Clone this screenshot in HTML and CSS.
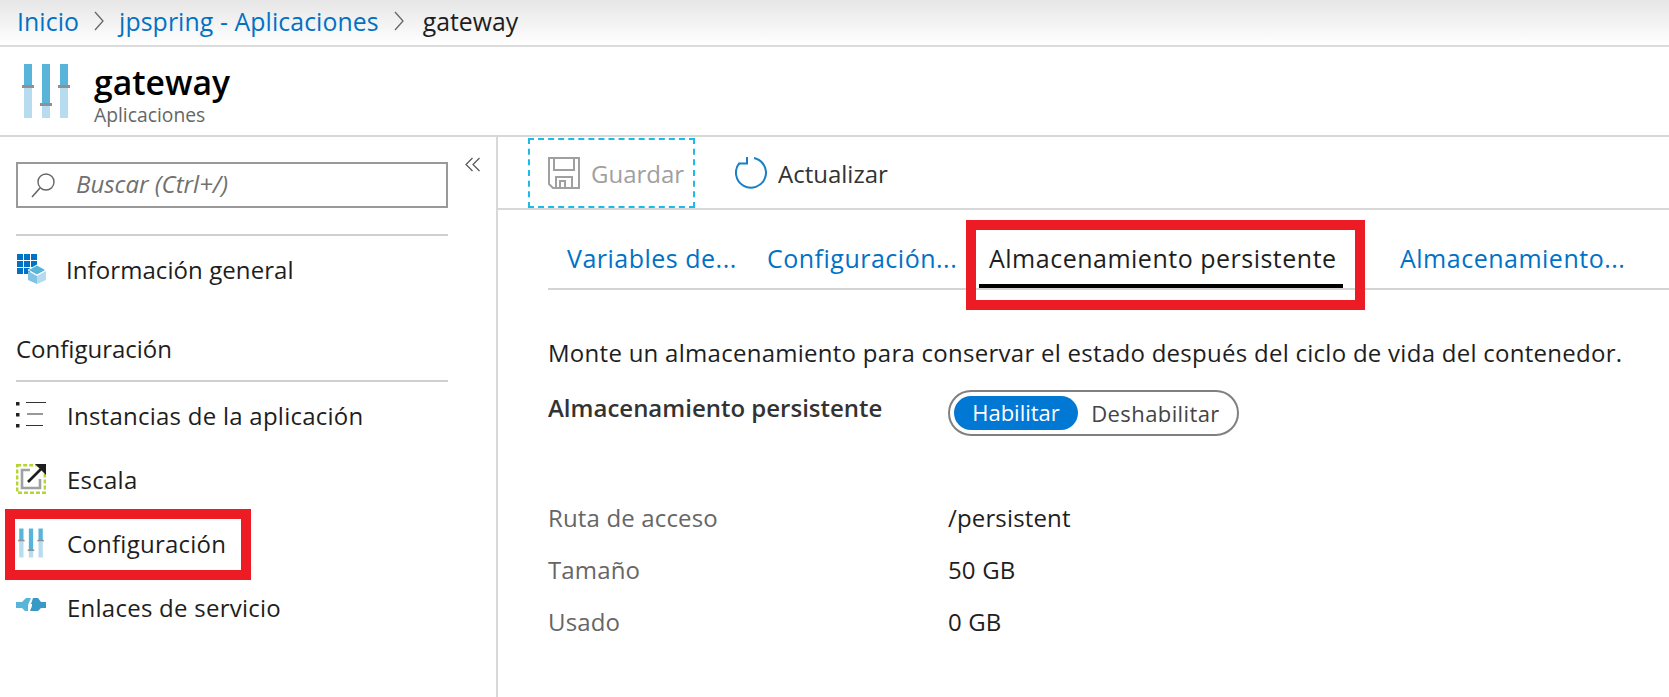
FILE: index.html
```html
<!DOCTYPE html>
<html lang="es">
<head>
  <meta charset="UTF-8" />
  <title>gateway - Aplicaciones</title>
  <link rel="stylesheet" href="styles.css">
</head>
<body>
  <svg class="defs" width="0" height="0">
    <symbol id="sliders" viewBox="0 0 48 56">
      <rect x="2" y="1" width="8" height="22" fill="#59b4d9"/>
      <rect x="2" y="25" width="8" height="30" fill="#b8dcef"/>
      <rect x="0" y="22" width="12" height="3" fill="#909090"/>
      <rect x="20" y="1" width="8" height="40" fill="#59b4d9"/>
      <rect x="20" y="43" width="8" height="12" fill="#b8dcef"/>
      <rect x="18" y="40" width="12" height="3" fill="#909090"/>
      <rect x="38" y="1" width="8" height="22" fill="#59b4d9"/>
      <rect x="38" y="25" width="8" height="30" fill="#b8dcef"/>
      <rect x="36" y="22" width="12" height="3" fill="#909090"/>
    </symbol>
  </svg>

  <nav class="breadcrumb">
    <a href="#">Inicio</a>
    <svg class="chevron" viewBox="0 0 10 20"><path d="M1 1l8 9-8 9" fill="none" stroke="#666" stroke-width="1.3"/></svg>
    <a href="#">jpspring - Aplicaciones</a>
    <svg class="chevron" viewBox="0 0 10 20"><path d="M1 1l8 9-8 9" fill="none" stroke="#666" stroke-width="1.3"/></svg>
    <span class="crumb-last">gateway</span>
  </nav>

  <header class="blade-head">
    <svg class="blade-icon"><use href="#sliders"/></svg>
    <div class="blade-text">
      <h1>gateway</h1>
      <div class="blade-sub">Aplicaciones</div>
    </div>
  </header>

  <div class="layout">
    <aside class="sidebar">
      <div class="search-row">
        <div class="search">
          <svg class="search-icon" viewBox="0 0 26 26"><circle cx="16" cy="10" r="8" fill="none" stroke="#666" stroke-width="1.4"/><path d="M10 16L2 25" stroke="#666" stroke-width="1.6"/></svg>
          <span class="search-text">Buscar (Ctrl+/)</span>
        </div>
        <svg class="collapse" viewBox="0 0 15 15"><path d="M7.5 1L1 7.5 7.5 14M14.5 1L8 7.5l6.5 6.5" fill="none" stroke="#555" stroke-width="1.2"/></svg>
      </div>
      <div class="nav-item nav-first">
        <svg class="nav-icon" viewBox="0 0 30 30">
          <path d="M1 0h6v6H1zM8 0h6v6H8zM15 0h6v6h-6zM1 7h6v6H1zM8 7h6v6H8zM15 7h6v6h-6zM1 14h6v6H1zM8 14h6v6H8z" fill="#0072c6"/>
          <path d="M21 11l9 5-9 5-9-5z" fill="#59b4d9" stroke="#fff" stroke-width="1"/>
          <path d="M12 17l9 5v8l-9-4z" fill="#7fc4e4"/>
          <path d="M30 17l-9 5v8l9-4z" fill="#b3dcee"/>
        </svg>
        Información general
      </div>
      <div class="nav-title">Configuración</div>
      <div class="nav-item">
        <svg class="nav-icon" viewBox="0 0 30 30">
          <path d="M0 2h3.5v3.5H0zM0 13h3.5v3.5H0zM0 24h3.5v3.5H0z" fill="#222"/>
          <path d="M10 2.5h20M11 14h16M10 25.5h17" stroke="#333" stroke-width="1.2"/>
        </svg>
        Instancias de la aplicación
      </div>
      <div class="nav-item">
        <svg class="nav-icon" viewBox="0 0 30 30">
          <rect x="1.2" y="1.2" width="27.6" height="27.6" fill="none" stroke="#b8d432" stroke-width="2.4" stroke-dasharray="4 2"/>
          <path d="M14 6H6v18h18v-9" fill="none" stroke="#a0a1a2" stroke-width="2.6"/>
          <path d="M12 18L26 4" stroke="#1e1e1e" stroke-width="2.6"/>
          <path d="M19 0h11v11z" fill="#1e1e1e"/>
        </svg>
        Escala
      </div>
      <div class="nav-item nav-marked">
        <svg class="nav-icon"><use href="#sliders"/></svg>
        Configuración
      </div>
      <div class="nav-item">
        <svg class="nav-icon" viewBox="0 0 30 30">
          <path d="M0 10h6l4-4h5l-3 7v6H9l-3-3H0z" fill="#59b4d9"/>
          <path d="M17 6h5l3 4h5v6h-5l-3 3h-8l2-5v-2h-1z" fill="#3999c6"/>
        </svg>
        Enlaces de servicio
      </div>
    </aside>

    <main class="content">
      <div class="toolbar">
        <button class="tool tool-focus" disabled>
          <svg class="tool-icon" viewBox="0 0 32 32">
            <path d="M1 1h30v30H5l-4-4z" fill="none" stroke="#a0a0a0" stroke-width="2"/>
            <path d="M6 1v12h20V1M8 31V20h16v11M12 31v-7h5v7" fill="none" stroke="#a0a0a0" stroke-width="2"/>
          </svg>
          Guardar
        </button>
        <button class="tool tool-refresh">
          <svg class="tool-icon" viewBox="0 0 32 32">
            <path d="M19 1A15 15 0 1 1 4.5 6" fill="none" stroke="#1a7fc4" stroke-width="2"/>
            <path d="M12 0v6.5H4" fill="none" stroke="#1a7fc4" stroke-width="2"/>
          </svg>
          Actualizar
        </button>
      </div>

      <div class="pane">
        <div class="tabs">
          <a class="tab tab-one" href="#">Variables de...</a>
          <a class="tab tab-two" href="#">Configuración...</a>
          <a class="tab tab-active" href="#">Almacenamiento persistente</a>
          <a class="tab tab-four" href="#">Almacenamiento...</a>
        </div>

        <p class="intro">Monte un almacenamiento para conservar el estado después del ciclo de vida del contenedor.</p>

        <div class="field">
          <label class="field-label">Almacenamiento persistente</label>
          <div class="toggle">
            <span class="toggle-on">Habilitar</span>
            <span class="toggle-off">Deshabilitar</span>
          </div>
        </div>

        <dl class="details">
          <dt>Ruta de acceso</dt><dd>/persistent</dd>
          <dt>Tamaño</dt><dd>50 GB</dd>
          <dt>Usado</dt><dd>0 GB</dd>
        </dl>
      </div>
    </main>
  </div>
</body>
</html>
```

FILE: styles.css
```css
*, *::before, *::after {
  box-sizing: border-box;
}
html, body {
  height: 100%;
}
body {
  margin: 0;
  display: flex;
  flex-direction: column;
  overflow: hidden;
  font-family: "Open Sans", "Noto Sans", sans-serif;
  font-size: 24px;
  color: #1e1e1e;
  background: white;
}
a {
  color: #0072c6;
  text-decoration: none;
}
.defs {
  position: absolute;
}

/* breadcrumb */
.breadcrumb {
  height: 47px;
  flex: none;
  display: flex;
  align-items: center;
  gap: 15px;
  padding: 0 0 4px 17px;
  font-size: 24.8px;
  letter-spacing: 0.1px;
  background: linear-gradient(to bottom, #e6e6e6, #ffffff);
  border-bottom: 2px solid #dcdcdc;
}
.chevron {
  width: 10px;
  height: 20px;
}
.crumb-last {
  margin-left: 4px;
  letter-spacing: 0;
}

/* blade header */
.blade-head {
  height: 90px;
  flex: none;
  display: flex;
  align-items: center;
  gap: 24px;
  padding-left: 22px;
  border-bottom: 2px solid #d8d8d8;
}
.blade-icon {
  width: 48px;
  height: 56px;
}
.blade-text {
  padding-top: 10px;
}
.blade-head h1 {
  margin: 0;
  font-size: 33.7px;
  line-height: 38px;
  font-weight: 600;
  color: #000;
}
.blade-sub {
  font-size: 19.3px;
  line-height: 28px;
  color: #666;
}

.layout {
  flex: 1;
  display: flex;
  min-height: 0;
}

/* sidebar */
.sidebar {
  width: 498px;
  flex: none;
  padding: 25px 0 0 16px;
  border-right: 2px solid #d8d8d8;
}
.search-row {
  display: flex;
  align-items: flex-start;
  gap: 17px;
  padding-bottom: 26px;
}
.search {
  width: 432px;
  height: 46px;
  display: flex;
  align-items: center;
  gap: 20px;
  padding-left: 12px;
  border: 2px solid #999;
  font-style: italic;
  color: #707070;
}
.search-text {
  padding-bottom: 4px;
}
.search-icon {
  width: 26px;
  height: 26px;
}
.collapse {
  width: 15px;
  height: 15px;
  margin-top: -5px;
}
.nav-item {
  height: 64px;
  display: flex;
  align-items: center;
  gap: 21px;
  width: 432px;
  padding-bottom: 2px;
  letter-spacing: 0.25px;
}
.nav-first {
  height: 72px;
  padding-bottom: 4px;
  gap: 20px;
  letter-spacing: 0.08px;
  border-top: 2px solid #d0d0d0;
}
.nav-title {
  width: 432px;
  height: 76px;
  margin-bottom: 2px;
  padding-top: 27px;
  line-height: 32px;
  border-bottom: 2px solid #d0d0d0;
}
.nav-icon {
  width: 30px;
  height: 30px;
  flex: none;
}
.nav-marked {
  position: relative;
}
.nav-marked::after {
  content: "";
  position: absolute;
  left: -11px;
  top: -3px;
  width: 246px;
  height: 71px;
  border: 10px solid #ed1c24;
}

/* toolbar */
.content {
  flex: 1;
  min-width: 0;
}
.toolbar {
  height: 73px;
  display: flex;
  align-items: flex-start;
  padding-left: 30px;
  border-bottom: 2px solid #d8d8d8;
}
.tool {
  height: 70px;
  margin-top: 1px;
  display: flex;
  align-items: center;
  gap: 11px;
  padding: 0;
  border: none;
  background: none;
  font: inherit;
}
.tool-icon {
  width: 32px;
  height: 32px;
}
.tool-focus {
  width: 167px;
  padding-left: 18px;
  border: 2px dashed #1cbce8;
  color: #a0a0a0;
}
.tool-refresh {
  margin-left: 40px;
  color: #333;
}

/* tabs */
.pane {
  padding-left: 50px;
}
.tabs {
  height: 80px;
  display: flex;
  align-items: flex-end;
  font-size: 25px;
  letter-spacing: 0.5px;
  border-bottom: 2px solid #d4d4d4;
}
.tab {
  flex: none;
  height: 50px;
  line-height: 40px;
}
.tab-one {
  margin-left: 19px;
  width: 200px;
}
.tab-two {
  width: 212px;
}
.tab-active {
  position: relative;
  width: 421px;
  padding-left: 10px;
  color: #1e1e1e;
}
.tab-active::before {
  content: "";
  position: absolute;
  left: 0;
  top: 46px;
  width: 364px;
  height: 4px;
  background: #000;
}
.tab-active::after {
  content: "";
  position: absolute;
  left: -13px;
  top: -18px;
  width: 399px;
  height: 90px;
  border: 10px solid #ed1c24;
}

/* body */
.intro {
  margin: 0;
  padding-top: 47px;
  line-height: 32px;
  letter-spacing: 0.27px;
  color: #1e1e1e;
}
.field {
  display: flex;
  margin-top: 21px;
}
.field-label {
  width: 400px;
  padding-top: 2px;
  line-height: 32px;
  font-weight: 600;
  color: #333;
}
.toggle {
  width: 291px;
  height: 46px;
  display: flex;
  align-items: center;
  padding: 0 4px;
  border: 2px solid #808080;
  border-radius: 23px;
  font-size: 22px;
}
.toggle-on {
  width: 124px;
  height: 34px;
  line-height: 32px;
  text-align: center;
  border-radius: 17px;
  background: #0078d4;
  color: white;
}
.toggle-off {
  flex: 1;
  text-align: center;
  letter-spacing: 0.4px;
  color: #444;
}
.details {
  display: grid;
  grid-template-columns: 400px 1fr;
  grid-auto-rows: 52px;
  align-items: center;
  margin: 55px 0 0;
  letter-spacing: 0.15px;
}
.details dt {
  color: #666;
}
.details dd {
  margin: 0;
}
```
